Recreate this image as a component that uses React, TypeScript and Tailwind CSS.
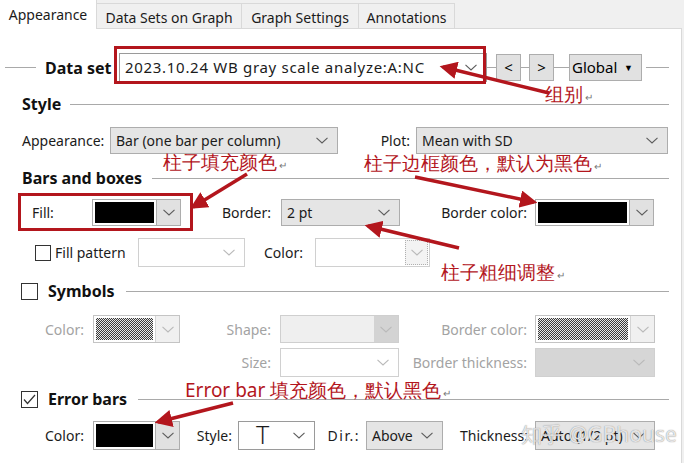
import type { ReactNode } from "react";

const red = "#b3161d";

function Chevron({ dim }: { dim?: boolean }) {
  return (
    <svg width="12" height="7" viewBox="0 0 12 7" className="shrink-0">
      <polyline
        points="0.5,0.8 6,6 11.5,0.8"
        fill="none"
        stroke={dim ? "#b9b9b9" : "#5c5c5c"}
        strokeWidth="1.1"
      />
    </svg>
  );
}

// readonly dropdown in the looks the dialog uses
function Combo({
  className,
  text,
  kind = "gray",
}: {
  className: string;
  text?: ReactNode;
  kind?: "gray" | "white" | "off" | "offWhite" | "offSplit";
}) {
  if (kind === "offSplit") {
    return (
      <div className={`flex h-full border border-[#cfcfcf] bg-[#efefef] ${className}`}>
        <div className="flex-1" />
        <div className="flex w-[24px] items-center justify-center bg-[#d3d3d3]">
          <Chevron dim />
        </div>
      </div>
    );
  }
  const look = {
    gray: "bg-[#e5e5e5] border-[#adadad] text-[#1b1b1b]",
    white: "bg-white border-[#9a9a9a] text-[#1b1b1b]",
    off: "bg-[#d6d6d6] border-[#d0d0d0]",
    offWhite: "bg-white border-[#d0d0d0]",
  }[kind];
  return (
    <div
      className={`flex h-full items-center justify-between border pl-[5px] pr-[9px] ${look} ${className}`}
    >
      <span className="whitespace-nowrap">{text}</span>
      <Chevron dim={kind !== "gray" && kind !== "white"} />
    </div>
  );
}

function ColorPick({ className, off }: { className: string; off?: boolean }) {
  return (
    <div
      className={`flex h-full border ${off ? "border-[#c4c4c4]" : "border-[#adadad]"} bg-white ${className}`}
    >
      <div className="flex-1 p-[2px]">
        <div
          className={
            off
              ? "h-full w-full bg-[repeating-conic-gradient(#3a3a3a_0%_25%,#e8e8e8_0%_50%)] bg-size-[2px_2px]"
              : "h-full w-full bg-black"
          }
        />
      </div>
      <div
        className={`flex w-[24px] items-center justify-center border-l ${off ? "border-[#d4d4d4] bg-[#f0f0f0]" : "border-[#adadad] bg-[#e1e1e1]"}`}
      >
        <Chevron dim={off} />
      </div>
    </div>
  );
}

function Check({ on, className = "" }: { on?: boolean; className?: string }) {
  return (
    <div
      className={`flex items-center justify-center border border-[#333] bg-white ${className}`}
    >
      {on && (
        <svg width="13" height="11" viewBox="0 0 13 11">
          <polyline points="1,5.5 4.5,9.5 12,1" fill="none" stroke="#333" strokeWidth="1.2" />
        </svg>
      )}
    </div>
  );
}

function Label({ className, children, off }: { className: string; children: ReactNode; off?: boolean }) {
  return (
    <div className={`shrink-0 whitespace-nowrap ${off ? "text-[#a3a3a3]" : "text-[#1b1b1b]"} ${className}`}>
      {children}
    </div>
  );
}

function Section({ title, check, on, gap }: { title: string; check?: boolean; on?: boolean; gap: string }) {
  return (
    <div className="flex h-[20px] items-center pl-[21px] pr-[12px]">
      {check && <Check on={on} className="mr-[10px] size-[17px]" />}
      {!check && <span className="w-px" />}
      <span className="text-[16px] font-bold text-[#111]">{title}</span>
      <div className={`h-px flex-1 bg-[#a9a9a9] ${gap}`} />
    </div>
  );
}

function Line({ className }: { className: string }) {
  return <div className={`h-px bg-[#a9a9a9] ${className}`} />;
}

function Tab({ label, active, className }: { label: string; active?: boolean; className: string }) {
  return (
    <div
      className={`flex items-center justify-center whitespace-nowrap text-[#1b1b1b] ${
        active
          ? "relative z-10 -mb-px h-[29px] border-r border-[#d9d9d9] bg-white"
          : "h-[25px] border border-b-0 border-l-0 border-[#d9d9d9] bg-[#f0f0f0] pt-[2px]"
      } ${className}`}
    >
      {label}
    </div>
  );
}

function Note({ className, children }: { className: string; children: ReactNode }) {
  return (
    <div
      className={`absolute whitespace-nowrap text-[19px] leading-none text-[#b3161d] ${className}`}
    >
      {children}
      <span className="ml-[2px] text-[10px] text-[#777]">↵</span>
    </div>
  );
}

const arrows: [number, number, number, number][] = [
  [549, 93, 443, 67],
  [247, 174, 193, 207],
  [415, 177, 534, 202],
  [459, 248, 368, 226],
  [233, 403, 158, 422],
];

export default function App() {
  return (
    <div className="relative h-[463px] w-[684px] overflow-hidden bg-[#f0f0f0] font-['Noto_Sans',sans-serif] text-[14px]">
      <div className="flex h-[28px] items-end">
        <Tab label="Appearance" active className="w-[97px]" />
        <Tab label="Data Sets on Graph" className="w-[145px]" />
        <Tab label="Graph Settings" className="w-[117px]" />
        <Tab label="Annotations" className="w-[96px]" />
      </div>

      <div className="flex h-[440px] w-[682px] flex-col border-r border-t border-[#d9d9d9] bg-white">
        {/* data set */}
        <div className="mt-[24px] flex h-[29px] items-center pr-[12px]">
          <Line className="ml-[5px] w-[31px]" />
          <span className="ml-[9px] w-[74px] text-[16px] font-bold text-[#111]">Data set</span>
          <Combo
            className="w-[368px]"
            kind="white"
            text={<span className="text-[15px] tracking-[0.7px]">2023.10.24 WB gray scale analyze:A:NC</span>}
          />
          <Line className="w-[9px]" />
          <div className="flex h-[27px] w-[25px] items-center justify-center border border-[#adadad] bg-[#e1e1e1] text-[15px]">&lt;</div>
          <Line className="w-[8px]" />
          <div className="flex h-[27px] w-[25px] items-center justify-center border border-[#adadad] bg-[#e1e1e1] text-[15px]">&gt;</div>
          <Line className="w-[15px]" />
          <div className="flex h-[27px] w-[73px] items-center justify-between border border-[#adadad] bg-[#e1e1e1] pl-[2px] pr-[8px] text-[15px]">
            Global
            <span className="text-[9px]">▼</span>
          </div>
          <Line className="ml-[4px] flex-1" />
        </div>

        <div className="mt-[12px]">
          <Section title="Style" gap="ml-[9px]" />
        </div>

        <div className="mt-[13px] flex h-[27px] items-center pl-[22px]">
          <Label className="w-[88px]">Appearance:</Label>
          <Combo className="w-[228px]" text="Bar (one bar per column)" />
          <Label className="w-[78px] pr-[6px] text-right">Plot:</Label>
          <Combo className="w-[252px]" text="Mean with SD" />
        </div>

        <div className="mt-[14px]">
          <Section title="Bars and boxes" gap="ml-[10px]" />
        </div>

        <div className="mt-[11px] flex h-[27px] items-center">
          <Label className="w-[92px] pl-[32px]">Fill:</Label>
          <ColorPick className="w-[89px]" />
          <Label className="w-[100px] pr-[10px] text-right">Border:</Label>
          <Combo className="w-[119px]" text="2 pt" />
          <Label className="w-[135px] pr-[8px] text-right">Border color:</Label>
          <ColorPick className="w-[119px]" />
        </div>

        <div className="mt-[12px] flex h-[29px] items-center">
          <Check className="ml-[35px] size-[16px]" />
          <Label className="w-[87px] pl-[4px]">Fill pattern</Label>
          <Combo className="w-[107px]" kind="offWhite" />
          <Label className="w-[70px] pl-[19px]">Color:</Label>
          <div className="flex h-full w-[115px] border border-[#d0d0d0] bg-white">
            <div className="flex-1" />
            <div className="m-[1px] flex w-[23px] items-center justify-center border border-dotted border-[#b0b0b0] bg-[#f3f3f3]">
              <Chevron dim />
            </div>
          </div>
        </div>

        <div className="mt-[14px]">
          <Section title="Symbols" check gap="ml-[12px]" />
        </div>

        <div className="mt-[14px] flex h-[28px] items-center">
          <Label off className="w-[93px] pl-[45px]">Color:</Label>
          <ColorPick off className="w-[87px]" />
          <Label off className="w-[100px] pr-[9px] text-right">Shape:</Label>
          <Combo className="w-[119px]" kind="offSplit" />
          <Label off className="w-[136px] pr-[8px] text-right">Border color:</Label>
          <ColorPick off className="w-[120px]" />
        </div>

        <div className="mt-[5px] flex h-[29px] items-center">
          <Label off className="ml-[180px] w-[100px] pr-[9px] text-right">Size:</Label>
          <Combo className="w-[119px]" kind="offWhite" />
          <Label off className="w-[136px] pr-[8px] text-right">Border thickness:</Label>
          <Combo className="w-[120px]" kind="off" />
        </div>

        <div className="mt-[12px]">
          <Section title="Error bars" check on gap="ml-[11px]" />
        </div>

        <div className="mt-[12px] flex h-[29px] items-center">
          <Label className="w-[93px] pl-[45px]">Color:</Label>
          <ColorPick className="w-[87px]" />
          <Label className="w-[58px] pr-[6px] text-right">Style:</Label>
          <Combo className="w-[77px]" kind="white" text={<span className="pl-[12px] text-[25px] font-light leading-none">T</span>} />
          <Label className="w-[51px] pr-[6px] text-right tracking-[1.5px]">Dir.:</Label>
          <Combo className="w-[77px]" text="Above" />
          <Label className="w-[92px] pl-[17px]">Thickness:</Label>
          <Combo className="w-[120px]" text="Auto (1/2 pt)" />
        </div>
      </div>

      {/* annotations drawn over the dialog */}
      <div className="pointer-events-none absolute left-[114px] top-[46px] h-[38px] w-[372px] border-[3px] border-[#b3161d]" />
      <div className="pointer-events-none absolute left-[18px] top-[193px] h-[38px] w-[175px] border-[3px] border-[#b3161d]" />

      <svg className="pointer-events-none absolute inset-0" width="684" height="463">
        <defs>
          <marker id="head" viewBox="0 0 10 10" refX="8" refY="5" markerWidth="5" markerHeight="5" orient="auto">
            <path d="M0,0 L10,5 L0,10 z" fill={red} />
          </marker>
        </defs>
        {arrows.map(([x1, y1, x2, y2], i) => (
          <line key={i} x1={x1} y1={y1} x2={x2} y2={y2} stroke={red} strokeWidth="3.5" markerEnd="url(#head)" />
        ))}
      </svg>

      <Note className="left-[545px] top-[85px]">组别</Note>
      <Note className="left-[163px] top-[153px]">柱子填充颜色</Note>
      <Note className="left-[364px] top-[154px]">柱子边框颜色，默认为黑色</Note>
      <Note className="left-[441px] top-[263px]">柱子粗细调整</Note>
      <Note className="left-[185px] top-[381px]">Error bar 填充颜色，默认黑色</Note>

      <div className="pointer-events-none absolute left-[521px] top-[424px] whitespace-nowrap text-[21px] leading-none text-white/80 [text-shadow:0_0_1px_#6b6b6b]">
        知乎 @GBhouse
      </div>
    </div>
  );
}
